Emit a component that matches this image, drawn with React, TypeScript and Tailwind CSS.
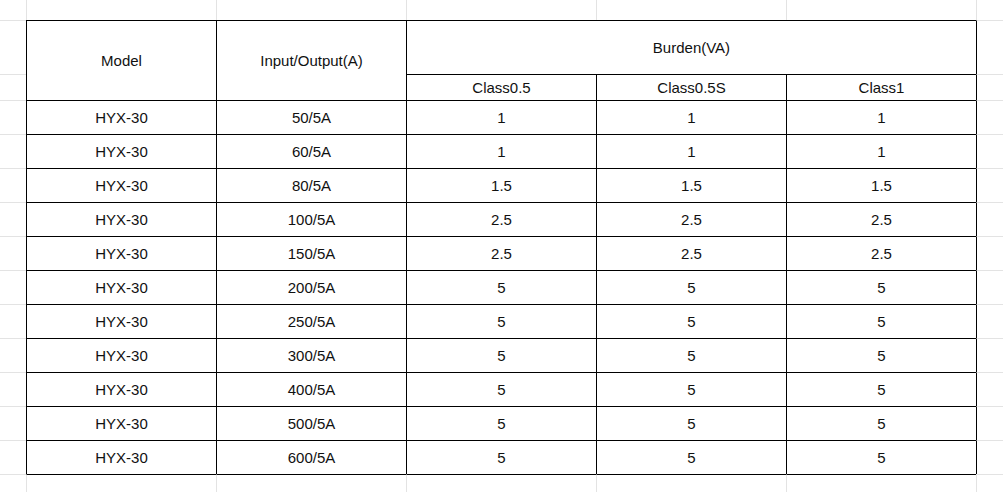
import React from "react";

const G = "#e3e3e3";
const B = "#000000";

type Row = [string, string, string, string, string];
const rows: Row[] = [
  ["HYX-30", "50/5A", "1", "1", "1"],
  ["HYX-30", "60/5A", "1", "1", "1"],
  ["HYX-30", "80/5A", "1.5", "1.5", "1.5"],
  ["HYX-30", "100/5A", "2.5", "2.5", "2.5"],
  ["HYX-30", "150/5A", "2.5", "2.5", "2.5"],
  ["HYX-30", "200/5A", "5", "5", "5"],
  ["HYX-30", "250/5A", "5", "5", "5"],
  ["HYX-30", "300/5A", "5", "5", "5"],
  ["HYX-30", "400/5A", "5", "5", "5"],
  ["HYX-30", "500/5A", "5", "5", "5"],
  ["HYX-30", "600/5A", "5", "5", "5"],
];

function Cell({
  children,
  left,
  top,
  className = "",
}: {
  children?: React.ReactNode;
  left?: string;
  top?: string;
  className?: string;
}) {
  return (
    <div
      className={`flex items-center justify-center pt-[2px] ${left ? "border-l" : ""} ${top ? "border-t" : ""} ${className}`}
      style={{ borderLeftColor: left, borderTopColor: top }}
    >
      {children}
    </div>
  );
}

export default function App() {
  const cells: React.ReactNode[] = [];
  cells.push(<Cell key="r0c0" />);
  for (let c = 1; c <= 6; c++) cells.push(<Cell key={`r0c${c}`} left={G} />);
  cells.push(<Cell key="h0" top={G} />);
  cells.push(
    <Cell key="model" left={B} top={B} className="row-span-2">
      Model
    </Cell>
  );
  cells.push(
    <Cell key="io" left={B} top={B} className="row-span-2">
      Input/Output(A)
    </Cell>
  );
  cells.push(
    <Cell key="burden" left={B} top={B} className="col-span-3">
      Burden(VA)
    </Cell>
  );
  cells.push(<Cell key="h6" left={B} top={G} />);
  cells.push(<Cell key="h2c0" top={G} />);
  cells.push(<Cell key="c05" left={B} top={B}>Class0.5</Cell>);
  cells.push(<Cell key="c05s" left={B} top={B}>Class0.5S</Cell>);
  cells.push(<Cell key="c1" left={B} top={B}>Class1</Cell>);
  cells.push(<Cell key="h2c6" left={B} top={G} />);
  rows.forEach((r, i) => {
    cells.push(<Cell key={`d${i}c0`} top={G} />);
    r.forEach((v, j) => {
      cells.push(
        <Cell key={`d${i}c${j + 1}`} left={B} top={B}>
          {v}
        </Cell>
      );
    });
    cells.push(<Cell key={`d${i}c6`} left={B} top={G} />);
  });
  cells.push(<Cell key="bc0" top={G} />);
  for (let c = 1; c <= 5; c++) cells.push(<Cell key={`bc${c}`} left={G} top={B} />);
  cells.push(<Cell key="bc6" left={G} top={G} />);

  return (
    <div
      className="w-[1003px] h-[492px] overflow-hidden bg-white text-[15px] text-[#111] grid grid-cols-[26px_190px_190px_190px_190px_190px_1fr] grid-rows-[20px_54px_26px_repeat(11,34px)_1fr]"
      style={{ fontFamily: '"Liberation Sans", Arial, sans-serif' }}
    >
      {cells}
    </div>
  );
}
